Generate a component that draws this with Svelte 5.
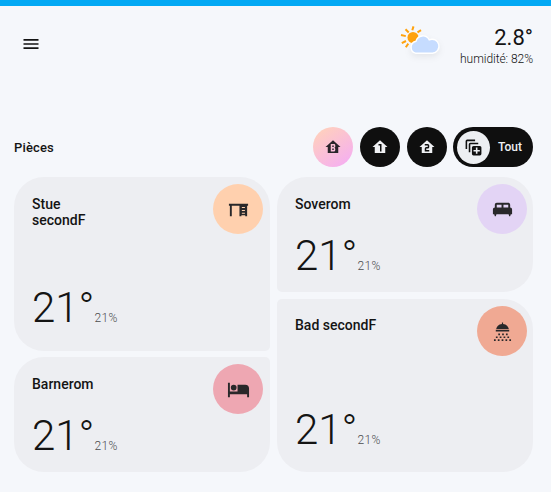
<script>
  const house = 'M12 3L2 12H5V20H19V12H22L12 3';
  const floors = [
    { id: 'basement', active: true, path: house + 'M9 8H13.5A1.5 1.5 0 0 1 15 9.5V11.5A1.5 1.5 0 0 1 13.5 13A1.5 1.5 0 0 1 15 14.5V16A2 2 0 0 1 13 18H9V8M11 10V12H13V10H11M11 14V16H13V14H11Z' },
    { id: 'first', active: false, path: house + 'M10 8H14V18H12V10H10V8Z' },
    { id: 'second', active: false, path: house + 'M9 8H13A2 2 0 0 1 15 10V12A2 2 0 0 1 13 14H11V16H15V18H9V14A2 2 0 0 1 11 12H13V10H9V8Z' }
  ];
  const shower = 'M11.4 2.5H12.6V4.1C16.3 4.6 18 6.6 18.6 9.5H5.4C6 6.6 7.7 4.6 11.4 4.1ZM5 10.1H19V12.1H5Z'
    + [[8.5, 14.1], [12.5, 14.1], [16.5, 14.1], [6, 17.1], [10, 17.1], [14, 17.1], [18, 17.1], [4, 20.1], [8, 20.1], [12, 20.1], [16, 20.1], [20, 20.1]]
      .map(([x, y]) => `M${x - 0.9} ${y}h1.8v1.7h-1.8Z`).join('');
  const columns = [
    [
      { name: 'Stue secondF', color: '#ffd0ae', shape: 'tall upper-left', icon: 'M2 6H22V8H21V19H19V18H15V19H13V8H5V19H3V8H2ZM15.5 9.5V10.5H18.7V9.5ZM15.5 12.5V13.5H18.7V12.5ZM15.5 15.5V16.5H18.7V15.5Z' },
      { name: 'Barnerom', color: '#eea7b2', shape: 'short lower-left', icon: 'M19 7H11V14H3V5H1V20H3V17H21V20H23V11A4 4 0 0 0 19 7M7 13A3 3 0 0 0 10 10A3 3 0 0 0 7 7A3 3 0 0 0 4 10A3 3 0 0 0 7 13Z' }
    ],
    [
      { name: 'Soverom', color: '#e3d4f5', shape: 'short upper-right', icon: 'M20 10V7C20 5.9 19.1 5 18 5H6C4.9 5 4 5.9 4 7V10C2.9 10 2 10.9 2 12V17H3.33L4 19H5L5.67 17H18.33L19 19H20L20.67 17H22V12C22 10.9 21.1 10 20 10M11 10H6V7H11V10M18 10H13V7H18V10Z' },
      { name: 'Bad secondF', color: '#f0a993', shape: 'tall lower-right', icon: shower }
    ]
  ];
</script>

<div class="page">
  <header>
    <svg class="menu" viewBox="0 0 24 24"><path d="M3 6H21V8H3V6M3 11H21V13H3V11M3 16H21V18H3V16Z" /></svg>
    <div class="weather">
      <svg class="sky" viewBox="0 0 44 40">
        <g stroke="#ffa20d" stroke-width="2" stroke-linecap="butt">
          <path d="M9.7 8.5L6.5 5.3M13.3 6.3L14.5 2.4M18.5 8.4L22 6.2M6.8 12.1L2 11M7 17L2.8 19.2M9.3 19.6L6.8 23.2" />
        </g>
        <circle cx="14" cy="13.5" r="5.5" fill="#ffa20d" />
        <path class="cloud" d="M16.5 29.2A6.2 6.2 0 0 1 17 17.2A7.1 7.1 0 0 1 30.2 15.8A7 7 0 1 1 33.5 29.2Z" />
      </svg>
      <div class="reading">
        <div class="outside">2.8°</div>
        <div class="humidity">humidité: 82%</div>
      </div>
    </div>
  </header>

  <section class="toolbar">
    <h1>Pièces</h1>
    <div class="filters">
      {#each floors as floor (floor.id)}
        <button class:active={floor.active} aria-label={floor.id}>
          <svg viewBox="0 0 24 24"><path d={floor.path} /></svg>
        </button>
      {/each}
      <button class="all">
        <span class="disc"><svg viewBox="0 0 24 24"><path d="M18 8H8V18H6V8A2 2 0 0 1 8 6H18V8M14 2H4A2 2 0 0 0 2 4V14H4V4H14V2M22 12V20A2 2 0 0 1 20 22H12A2 2 0 0 1 10 20V12A2 2 0 0 1 12 10H20A2 2 0 0 1 22 12M20 15H17V12H15V15H12V17H15V20H17V17H20V15Z" /></svg></span>
        <span class="label">Tout</span>
      </button>
    </div>
  </section>

  <main>
    {#each columns as cards}
      <div class="column">
        {#each cards as card (card.name)}
          <article class={card.shape}>
            <div class="top">
              <h2 class:narrow={card.name === 'Stue secondF'}>{card.name}</h2>
              <span class="badge" style:background={card.color}>
                <svg viewBox="0 0 24 24"><path fill-rule="evenodd" d={card.icon} /></svg>
              </span>
            </div>
            <div class="value"><span class="temp">21°</span><span class="percent">21%</span></div>
          </article>
        {/each}
      </div>
    {/each}
  </main>
</div>

<style>
  :global(body) { background: #f5f7fb; }
  .page {
    box-sizing: border-box;
    height: 492px;
    padding: 0 18px 0 14px;
    border-top: 6px solid #03a9f4;
    background: #f5f7fb;
    color: #141414;
    font-family: Roboto, sans-serif;
  }
  svg { display: block; fill: currentColor; }
  h1, h2 { margin: 0; font-weight: 470; }
  header { display: flex; justify-content: space-between; height: 121px; }
  .menu { width: 20px; height: 20px; margin: 28.4px 0 0 7px; }
  .weather { display: flex; align-items: flex-start; }
  .sky { width: 44px; height: 40px; margin: 18px 17px 0 0; overflow: visible; }
  .cloud { fill: #c6dcff; stroke: #fff; stroke-width: 1.4; filter: drop-shadow(0 3px 3px #0001); }
  .reading { padding-top: 18px; text-align: right; white-space: nowrap; }
  .outside { font-size: 22px; line-height: 28px; }
  .humidity { font-size: 12px; line-height: 14px; font-weight: 300; letter-spacing: -.05px; }
  .toolbar { display: flex; justify-content: space-between; align-items: center; height: 40px; }
  h1 { padding-top: 2px; font-size: 13px; line-height: 16px; letter-spacing: .15px; }
  .filters { display: flex; gap: 7px; }
  button {
    display: flex;
    align-items: center;
    justify-content: center;
    box-sizing: border-box;
    width: 40px;
    height: 40px;
    padding: 0;
    border: 0;
    border-radius: 20px;
    background: #0f0f0f;
    color: #f0f1f4;
    font-family: inherit;
  }
  button svg { width: 18px; height: 18px; }
  .active { background: linear-gradient(145deg, #ffd0bd 10%, #f5aff0 90%); color: #29252a; }
  .all { justify-content: flex-start; width: 80px; padding-left: 4px; margin-left: -1px; }
  .disc { display: flex; align-items: center; justify-content: center; width: 33px; height: 33px; border-radius: 50%; background: #edeff2; color: #111; }
  .disc svg { width: 19px; height: 19px; }
  .label { margin-left: 8px; font-size: 12px; font-weight: 470; }
  main { display: flex; gap: 7px; margin-top: 10px; }
  .column { display: flex; flex: 1; flex-direction: column; gap: 6px; height: 295px; }
  .column:last-child { gap: 7px; }
  article { display: flex; flex-direction: column; justify-content: space-between; box-sizing: border-box; padding: 7px 7px 16px 18px; border-radius: 30px; background: #edeef2; }
  .column:last-child article { padding-right: 6px; }
  .tall { flex: 1; }
  .short { flex: none; height: 115px; }
  .upper-left { border-bottom-right-radius: 5px; }
  .lower-left { border-top-right-radius: 5px; }
  .upper-right { border-bottom-left-radius: 5px; }
  .lower-right { border-top-left-radius: 5px; }
  .top { display: flex; justify-content: space-between; height: 50px; }
  h2 { padding-top: 12px; font-size: 14px; line-height: 16px; }
  .lower-right h2 { padding-top: 11px; }
  .upper-left .value { margin-bottom: 7px; }
  .lower-right .value { margin-bottom: 6px; }
  .narrow { width: 70px; }
  .badge { display: flex; align-items: center; justify-content: center; width: 50px; height: 50px; border-radius: 50%; color: #29282a; }
  .badge svg { width: 23px; height: 23px; }
  .value { display: flex; align-items: baseline; height: 40px; line-height: 40px; }
  .temp { font-size: 42px; font-weight: 300; }
  .percent { font-size: 12px; font-weight: 300; letter-spacing: .3px; color: #4b4c4e; }
</style>
